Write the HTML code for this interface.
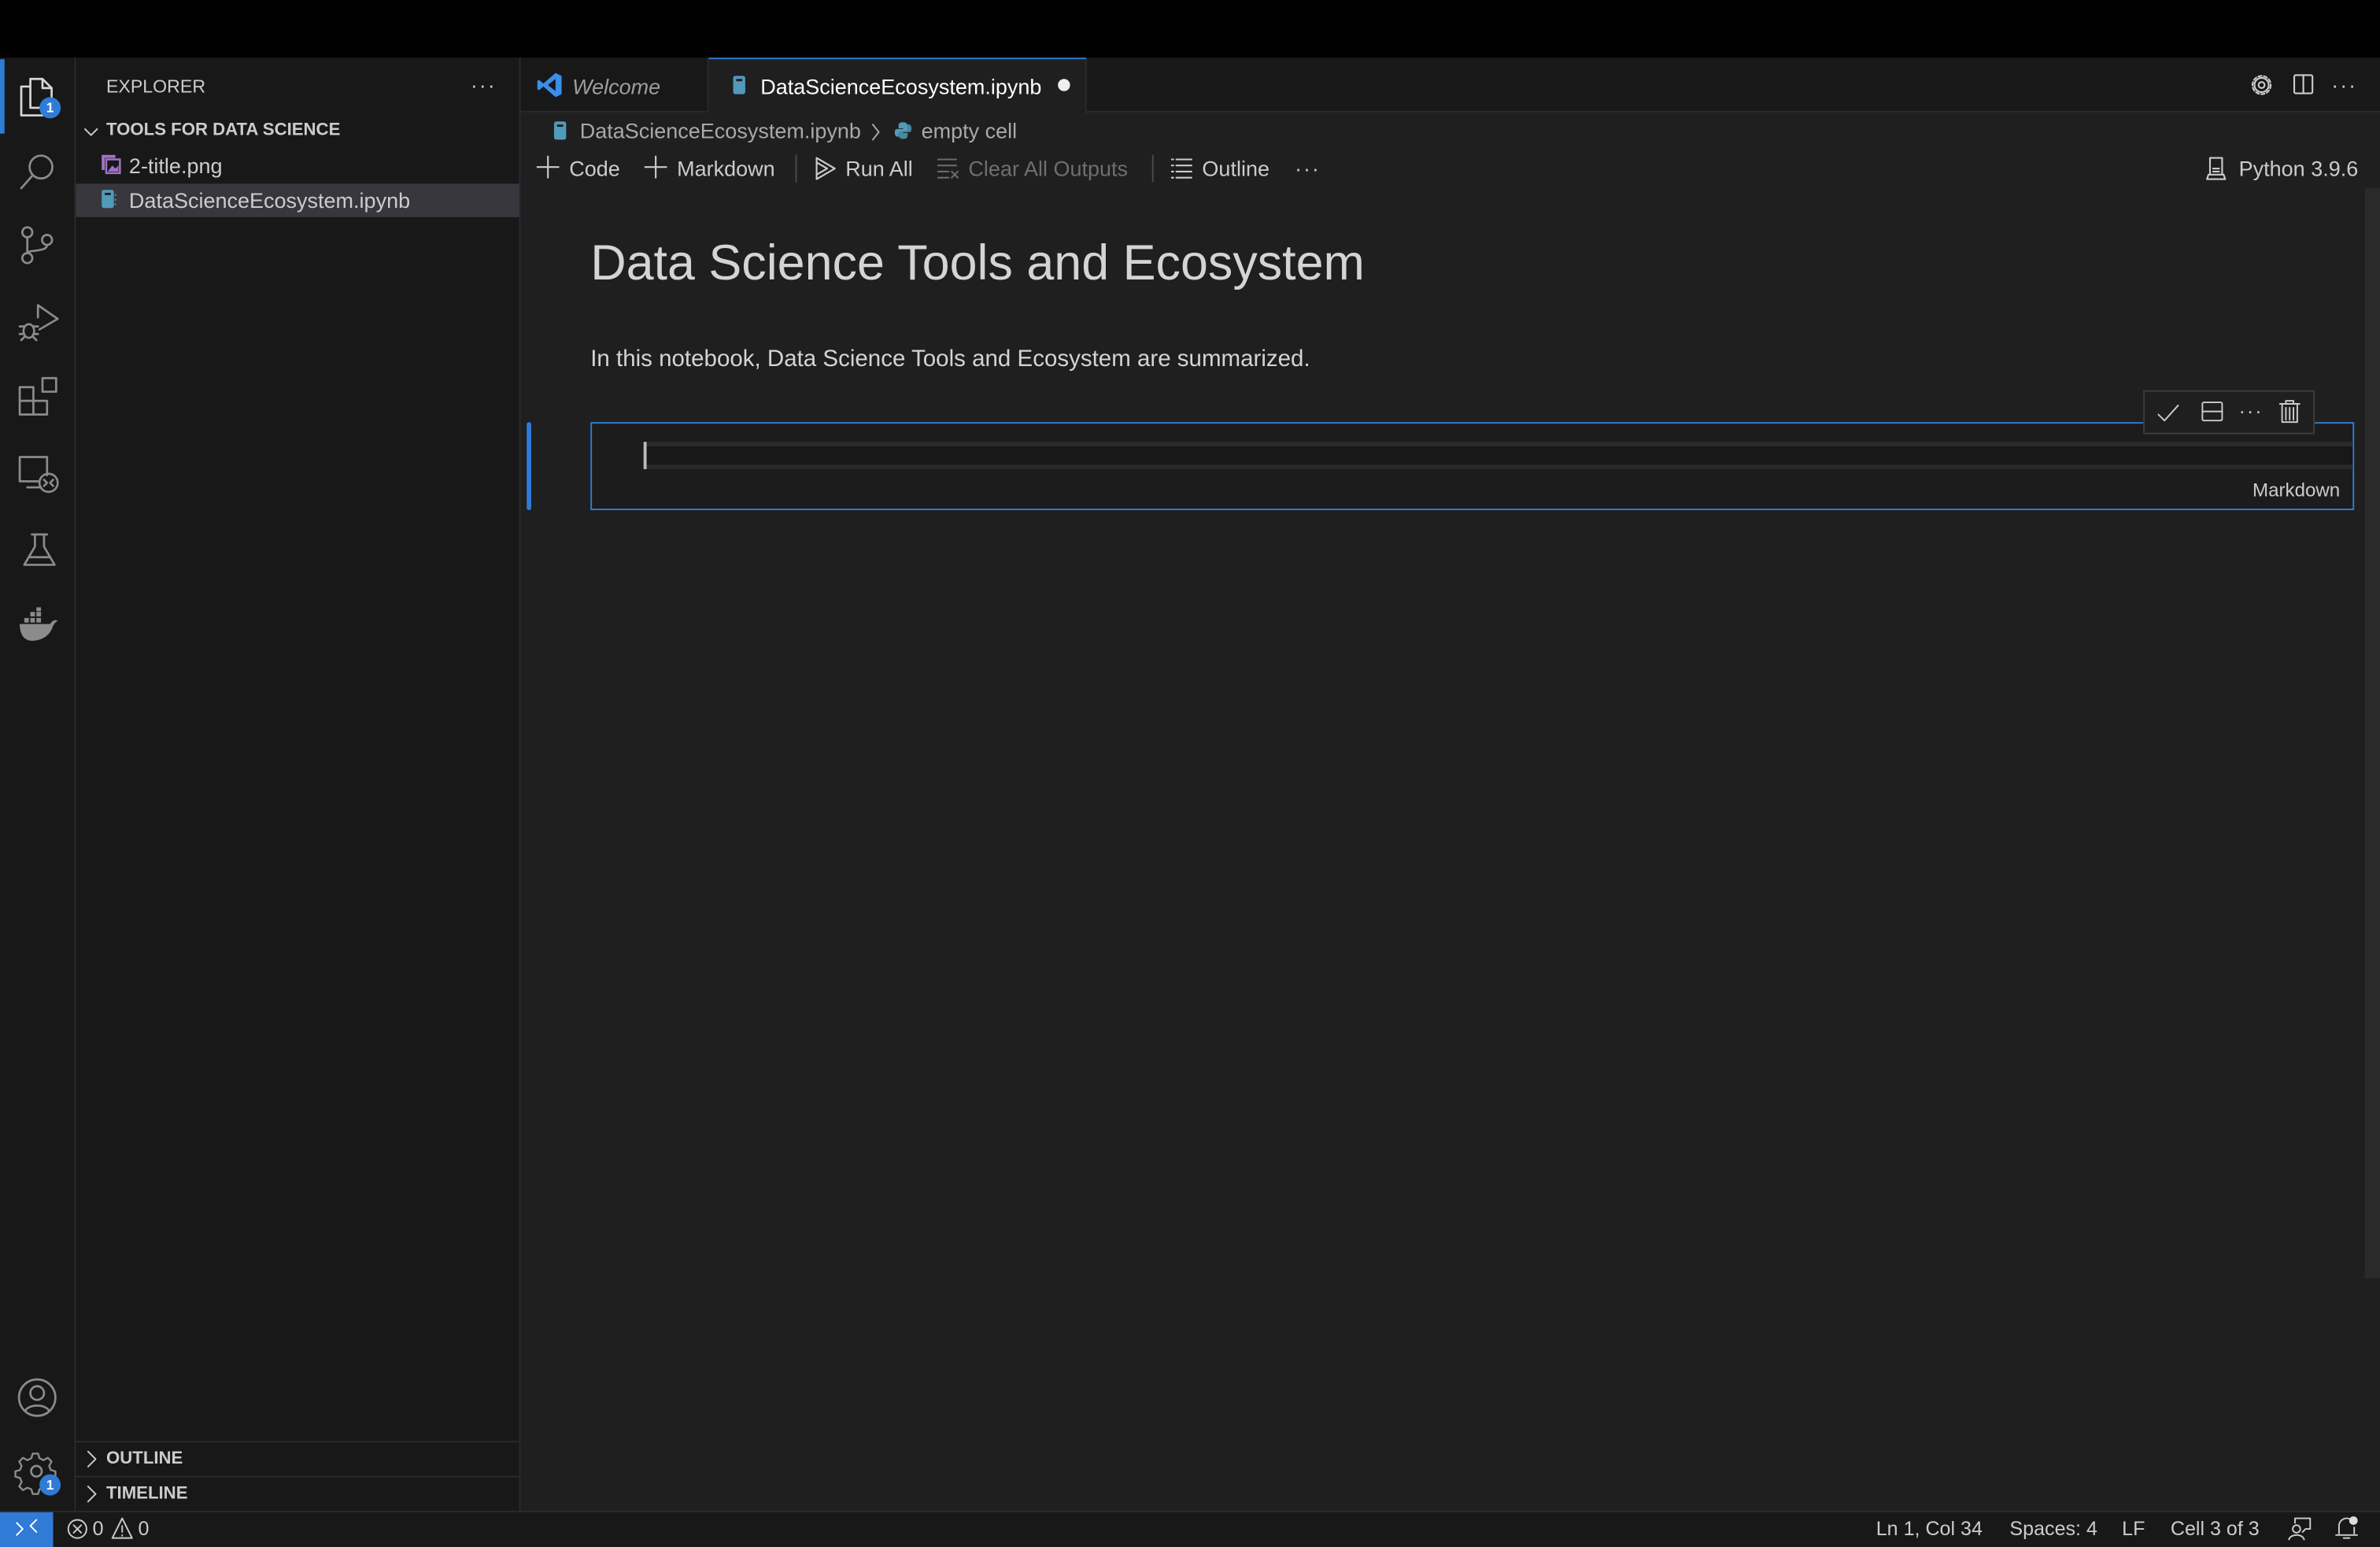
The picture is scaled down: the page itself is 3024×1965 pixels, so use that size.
<!DOCTYPE html>
<html><head><meta charset="utf-8">
<style>
*{box-sizing:border-box;margin:0;padding:0}
html,body{width:3024px;height:1964px;overflow:hidden;background:#1f1f1f}
#w{position:absolute;left:0;top:0;width:1568px;height:1019px;transform:scale(1.92857);transform-origin:0 0;font-family:"Liberation Sans",sans-serif;color:#ccc;background:#1f1f1f}
.a{position:absolute}
svg{position:absolute;overflow:visible}
.ic{fill:none;stroke:#8b8b8b;stroke-width:1.4;stroke-linecap:round;stroke-linejoin:round}
.t{font-size:14px;white-space:nowrap}
.badge{position:absolute;width:14px;height:14px;border-radius:7px;background:#2f7bd6;color:#fff;font-size:9px;font-weight:bold;text-align:center;line-height:14px}
</style></head><body><div id="w">
<div class="a" style="left:0;top:0;width:1568px;height:38px;background:#000"></div>
<div class="a" style="left:0;top:38px;width:50px;height:957px;background:#181818;border-right:1px solid #2b2b2b"></div>
<div class="a" style="left:0;top:39px;width:3px;height:49px;background:#2f7bd6"></div>
<svg style="left:12px;top:48px" width="26" height="30"><path class="ic" style="stroke:#d7d7d7" d="M8 4h8l6 6v13H8z M16 4v6h6 M8 9H2v19h14v-5"/></svg>
<div class="badge" style="left:26px;top:64px">1</div>
<svg style="left:12px;top:100px" width="26" height="26"><circle class="ic" cx="15" cy="10" r="7.5"/><path class="ic" d="M9.5 15.5L2 24"/></svg>
<svg style="left:12px;top:148px" width="26" height="28"><circle class="ic" cx="6" cy="5" r="3.3"/><circle class="ic" cx="6" cy="22" r="3.3"/><circle class="ic" cx="19" cy="10" r="3.3"/><path class="ic" d="M6 8.3v10.4 M19 13.3c0 5-13 3-13 5.4"/></svg>
<svg style="left:12px;top:198px" width="28" height="28"><path class="ic" d="M13 3l13 9-12 7 M13 3v8"/><ellipse class="ic" cx="7" cy="20" rx="3.5" ry="4.5"/><path class="ic" d="M1 17h3M1 22h3M10 17h3M10 22h3M2 26l2-2M12 26l-2-2"/></svg>
<svg style="left:12px;top:248px" width="28" height="28"><path class="ic" d="M1 7h9v9h9v9H1z M1 16h9v9 M16 1h9v9h-9z"/></svg>
<svg style="left:12px;top:300px" width="28" height="26"><path class="ic" d="M19 13V1H1v16h12 M6 21h9"/><circle class="ic" cx="20" cy="18" r="6"/><path class="ic" d="M17 16l2 2-2 2M23 16l-2 2 2 2"/></svg>
<svg style="left:14px;top:350px" width="24" height="26"><path class="ic" d="M7 2h10 M9 2v8L2 22h20L15 10V2 M5 17h14"/></svg>
<svg style="left:11px;top:400px" width="28" height="24"><path d="M2 11h20c2-3 4-3 5-2-2 1-2 2-3 3-2 7-8 10-14 10C5 22 2 18 2 11z" fill="#8b8b8b"/><rect x="5" y="7" width="3" height="3" fill="#8b8b8b"/><rect x="9" y="7" width="3" height="3" fill="#8b8b8b"/><rect x="13" y="7" width="3" height="3" fill="#8b8b8b"/><rect x="9" y="3" width="3" height="3" fill="#8b8b8b"/><rect x="13" y="3" width="3" height="3" fill="#8b8b8b"/><rect x="13" y="0" width="3" height="2.5" fill="#8b8b8b"/></svg>
<svg style="left:11px;top:907px" width="28" height="28"><circle class="ic" cx="13.5" cy="13.5" r="12"/><circle class="ic" cx="13.5" cy="10.5" r="4.5"/><path class="ic" d="M5.5 22.5c2-5 14-5 16 0"/></svg>
<svg style="left:11px;top:956px" width="28" height="28"><circle class="ic" cx="13" cy="13" r="3.5"/><path class="ic" d="M11 1.5h4l1 3.5 3 1.5 3.3-1.8 2.8 2.8-1.8 3.3 1.2 3 3.5 1v4l-3.5 1-1.2 3 1.8 3.3-2.8 2.8-3.3-1.8-3 1.2-1 3.5h-4l-1-3.5-3-1.2-3.3 1.8-2.8-2.8 1.8-3.3-1.2-3-3.5-1v-4l3.5-1 1.2-3-1.8-3.3 2.8-2.8 3.3 1.8 3-1.5z" transform="scale(0.88) translate(1 0)"/></svg>
<div class="badge" style="left:26px;top:971px">1</div>

<div class="a" style="left:50px;top:38px;width:293px;height:957px;background:#181818;border-right:1px solid #2b2b2b"></div>
<div class="a" style="left:70px;top:50px;font-size:12px;color:#ccc">EXPLORER</div>
<div class="a" style="left:310px;top:48px;font-size:14px;color:#ccc;letter-spacing:1px">···</div>
<svg style="left:55px;top:82px" width="10" height="10"><path class="ic" style="stroke:#ccc;stroke-width:1" d="M1 3l4 4 4-4"/></svg>
<div class="a" style="left:70px;top:80px;font-size:11.5px;font-weight:bold;color:#ccc">TOOLS FOR DATA SCIENCE</div>
<svg style="left:66px;top:101px" width="14" height="14"><path d="M1 1h9v2H3v8H1z" fill="#a074c4"/><rect x="4" y="4" width="9" height="9" fill="none" stroke="#a074c4" stroke-width="1.3"/><path d="M5 12l3-4 2 2 2-2v4z" fill="#a074c4"/></svg>
<div class="a t" style="left:85px;top:101px;color:#ccc">2-title.png</div>
<div class="a" style="left:50px;top:121px;width:292px;height:22px;background:#37373d"></div>
<svg style="left:66px;top:124px" width="12" height="15"><rect x="1" y="1" width="8" height="12" rx="1.5" fill="#519aba"/><rect x="3" y="3" width="4" height="1.5" fill="#1f1f1f"/><path d="M10 4v1M10 7v1M10 10v1" stroke="#519aba"/></svg>
<div class="a t" style="left:85px;top:124px;color:#ccc">DataScienceEcosystem.ipynb</div>
<div class="a" style="left:50px;top:949px;width:292px;height:1px;background:#2b2b2b"></div>
<div class="a" style="left:50px;top:972px;width:292px;height:1px;background:#2b2b2b"></div>
<svg style="left:56px;top:955px" width="10" height="12"><path class="ic" style="stroke:#ccc;stroke-width:1" d="M2 1l5 5-5 5"/></svg>
<div class="a" style="left:70px;top:955px;font-size:11.5px;font-weight:bold">OUTLINE</div>
<svg style="left:56px;top:978px" width="10" height="12"><path class="ic" style="stroke:#ccc;stroke-width:1" d="M2 1l5 5-5 5"/></svg>
<div class="a" style="left:70px;top:978px;font-size:11.5px;font-weight:bold">TIMELINE</div>

<div class="a" style="left:343px;top:38px;width:1225px;height:36px;background:#181818;border-bottom:1px solid #2b2b2b"></div>
<div class="a" style="left:343px;top:38px;width:124px;height:35px;border-right:1px solid #2b2b2b"></div>
<svg style="left:353px;top:47px" width="18" height="18"><path d="M13 1l4 2v12l-4 2-8-7-3 2.5-1-1v-5l1-1 3 2.5z" fill="#3b8eea"/><path d="M13 5v8l-5-4z" fill="#181818"/></svg>
<div class="a t" style="left:377px;top:49px;font-style:italic;color:#9d9d9d">Welcome</div>
<div class="a" style="left:467px;top:38px;width:249px;height:37px;background:#1f1f1f;border-top:1px solid #2f7bd6;border-right:1px solid #2b2b2b"></div>
<svg style="left:482px;top:49px" width="12" height="15"><rect x="1" y="1" width="8" height="12" rx="1.5" fill="#519aba"/><rect x="3" y="3" width="4" height="1.5" fill="#1f1f1f"/></svg>
<div class="a t" style="left:501px;top:49px;color:#fff">DataScienceEcosystem.ipynb</div>
<div class="a" style="left:697px;top:52px;width:8px;height:8px;border-radius:4px;background:#eee"></div>
<svg style="left:1482px;top:48px" width="16" height="16"><circle class="ic" style="stroke:#ccc;stroke-width:1.1" cx="8" cy="8" r="2"/><circle class="ic" style="stroke:#ccc;stroke-width:1.1;stroke-dasharray:2.2 1.5" cx="8" cy="8" r="6"/><circle class="ic" style="stroke:#ccc;stroke-width:1.1" cx="8" cy="8" r="4.7"/></svg>
<svg style="left:1510px;top:48px" width="16" height="16"><rect class="ic" style="stroke:#ccc;stroke-width:1.1" x="1.5" y="1.5" width="12" height="12" rx="1"/><path class="ic" style="stroke:#ccc;stroke-width:1.1" d="M7.5 1.5v12"/></svg>
<div class="a" style="left:1536px;top:48px;font-size:14px;letter-spacing:1px">···</div>

<svg style="left:364px;top:79px" width="12" height="15"><rect x="1" y="1" width="8" height="12" rx="1.5" fill="#519aba"/><rect x="3" y="3" width="4" height="1.5" fill="#1f1f1f"/></svg>
<div class="a t" style="left:382px;top:78px;color:#a9a9a9">DataScienceEcosystem.ipynb</div>
<svg style="left:573px;top:81px" width="8" height="12"><path class="ic" style="stroke:#a9a9a9;stroke-width:1" d="M2 1l4 5-4 5"/></svg>
<svg style="left:589px;top:80px" width="12" height="12"><path d="M6 0.5c-3 0-3 1.3-3 2.5v1.5h3v.5H2C.5 5 .5 6.5.5 7.5S1 10 2 10h1V8.5C3 7 4 6.5 5 6.5h2.5c1 0 1.5-.5 1.5-1.5V3C9 1.5 8 .5 6 .5z" fill="#519aba"/><path d="M6 11.5c3 0 3-1.3 3-2.5V7.5H6V7h4c1.5 0 1.5-1.5 1.5-2.5S11 2 10 2H9v1.5C9 5 8 5.5 7 5.5H4.5C3.5 5.5 3 6 3 7v2c0 1.5 1 2.5 3 2.5z" fill="#519aba" opacity=".85"/></svg>
<div class="a t" style="left:607px;top:78px;color:#a9a9a9">empty cell</div>

<svg style="left:354px;top:103px" width="14" height="14"><path class="ic" style="stroke:#ccc;stroke-width:1.1" d="M7 0v14M0 7h14"/></svg>
<div class="a t" style="left:375px;top:103px">Code</div>
<svg style="left:425px;top:103px" width="14" height="14"><path class="ic" style="stroke:#ccc;stroke-width:1.1" d="M7 0v14M0 7h14"/></svg>
<div class="a t" style="left:446px;top:103px">Markdown</div>
<div class="a" style="left:524px;top:102px;width:1px;height:18px;background:#4a4a4a"></div>
<svg style="left:537px;top:103px" width="14" height="16"><path class="ic" style="stroke:#ccc;stroke-width:1.1" d="M1 1v14l12-7z M1 4l7 4-7 4"/></svg>
<div class="a t" style="left:557px;top:103px">Run All</div>
<svg style="left:617px;top:104px" width="16" height="14"><path class="ic" style="stroke:#6a6a6a;stroke-width:1.1" d="M1 1h12M1 5h12M1 9h7M1 13h7M10 9l4 4M14 9l-4 4"/></svg>
<div class="a t" style="left:638px;top:103px;color:#6f6f6f">Clear All Outputs</div>
<div class="a" style="left:759px;top:102px;width:1px;height:18px;background:#4a4a4a"></div>
<svg style="left:771px;top:104px" width="16" height="14"><path class="ic" style="stroke:#ccc;stroke-width:1.1" d="M1 1h1M1 5h1M1 9h1M1 13h1M4 1h10M4 5h10M4 9h10M4 13h10"/></svg>
<div class="a t" style="left:792px;top:103px">Outline</div>
<div class="a" style="left:853px;top:103px;font-size:14px;letter-spacing:1px">···</div>
<svg style="left:1453px;top:103px" width="15" height="16"><path class="ic" style="stroke:#ccc;stroke-width:1.1" d="M3 1h8v11H3z M1 15h12l-1-3H2z M5 8h4M5 10h4"/></svg>
<div class="a t" style="left:1475px;top:103px">Python 3.9.6</div>

<div class="a" style="left:1558px;top:124px;width:10px;height:718px;background:#2a2a2a"></div>

<div class="a" style="left:389px;top:154px;font-size:32.6px;color:#d4d4d4;white-space:nowrap">Data Science Tools and Ecosystem</div>
<div class="a" style="left:389px;top:228px;font-size:15.3px;color:#d4d4d4;white-space:nowrap">In this notebook, Data Science Tools and Ecosystem are summarized.</div>

<div class="a" style="left:347px;top:278px;width:3px;height:58px;border-radius:1.5px;background:#2f7bd6"></div>
<div class="a" style="left:389px;top:278px;width:1162px;height:58px;border:1px solid #2f7bd6;background:#1c1c1c"></div>
<div class="a" style="left:424px;top:291px;width:1126px;height:18px;background:#181818;border-top:3px solid #2a2a2a;border-bottom:3px solid #2a2a2a"></div>
<div class="a" style="left:424px;top:291px;width:2px;height:18px;background:#bbb"></div>
<div class="a" style="left:1484px;top:316px;font-size:12.5px;color:#ccc">Markdown</div>
<div class="a" style="left:1412px;top:257px;width:113px;height:29px;background:#1f1f1f;border:1px solid #3c3c3c"></div>
<svg style="left:1421px;top:264px" width="16" height="16"><path class="ic" style="stroke:#ccc;stroke-width:1" d="M1 9l4 4L14 3"/></svg>
<svg style="left:1450px;top:264px" width="16" height="16"><rect class="ic" style="stroke:#ccc;stroke-width:1" x="1" y="1" width="13" height="12" rx="1"/><path class="ic" style="stroke:#ccc;stroke-width:1" d="M1 7h13"/></svg>
<div class="a" style="left:1475px;top:263px;font-size:13px;letter-spacing:1px">···</div>
<svg style="left:1501px;top:263px" width="16" height="18"><path class="ic" style="stroke:#ccc;stroke-width:1" d="M1 3h13M5 3V1h5v2M2.5 3v12h10V3M5 5.5v8M7.5 5.5v8M10 5.5v8"/></svg>

<div class="a" style="left:0;top:995px;width:1568px;height:24px;background:#181818;border-top:1px solid #2b2b2b"></div>
<div class="a" style="left:0;top:996px;width:35px;height:23px;background:#2f7bd6"></div>
<svg style="left:10px;top:1000px" width="16" height="14"><path class="ic" style="stroke:#fff;stroke-width:1" d="M1 3l4 4-4 4M14 1l-4 4 4 4"/></svg>
<svg style="left:44px;top:1000px" width="14" height="14"><circle class="ic" style="stroke:#ccc;stroke-width:1" cx="7" cy="7" r="6"/><path class="ic" style="stroke:#ccc;stroke-width:1" d="M4.5 4.5l5 5M9.5 4.5l-5 5"/></svg>
<div class="a" style="left:61px;top:999px;font-size:13px">0</div>
<svg style="left:73px;top:999px" width="16" height="15"><path class="ic" style="stroke:#ccc;stroke-width:1" d="M7.5 1L14 14H1z M7.5 6v4M7.5 12v.5"/></svg>
<div class="a" style="left:91px;top:999px;font-size:13px">0</div>
<div class="a" style="left:1236px;top:999px;font-size:13px;white-space:nowrap">Ln 1, Col 34</div>
<div class="a" style="left:1324px;top:999px;font-size:13px;white-space:nowrap">Spaces: 4</div>
<div class="a" style="left:1398px;top:999px;font-size:13px">LF</div>
<div class="a" style="left:1430px;top:999px;font-size:13px;white-space:nowrap">Cell 3 of 3</div>
<svg style="left:1507px;top:999px" width="16" height="16"><circle class="ic" style="stroke:#ccc;stroke-width:1" cx="6" cy="8" r="2.5"/><path class="ic" style="stroke:#ccc;stroke-width:1" d="M1 15c1-4 9-4 10 0M5 4V1h10v7h-3l-2 2"/></svg>
<svg style="left:1538px;top:998px" width="16" height="17"><path class="ic" style="stroke:#ccc;stroke-width:1" d="M3 12V7a5 5 0 0 1 8-4M13 8v4M1 13h14M6 15h4"/><circle cx="12.5" cy="3.5" r="2.8" fill="#ddd"/></svg>
</div></body></html>
